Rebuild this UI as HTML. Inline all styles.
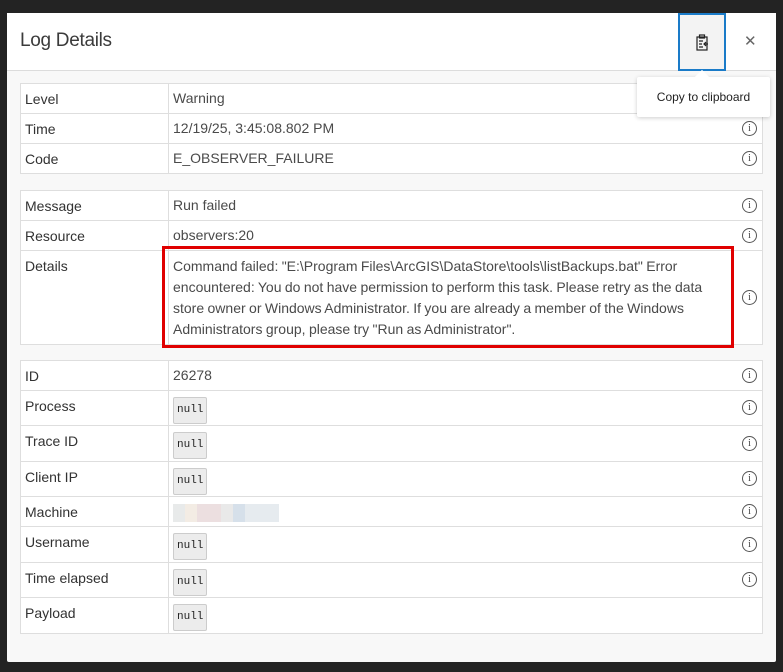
<!DOCTYPE html>
<html><head><style>
body{margin:0;width:783px;height:672px;background:#232323;font-family:"Liberation Sans",sans-serif;position:relative;overflow:hidden;color:#4a4a4a}
.dlg{position:absolute;left:7px;top:13px;width:769px;height:649px;background:#f8f8f8;border-radius:2px}
.hdr{position:absolute;left:0;top:0;width:769px;height:57px;background:#fff;border-bottom:1px solid #dcdcdc}
.ttl{position:absolute;left:13px;top:17px;font-size:19px;color:#3b3b3b;letter-spacing:-0.3px}
.copy{position:absolute;left:671px;top:0;width:44px;height:54px;border:2px solid #1a7bc8;background:#f3f3f3}
.x{position:absolute;left:737px;top:19px;font-size:15px;color:#666}
.tip{position:absolute;left:637px;top:77px;width:133px;height:40px;background:#fff;box-shadow:0 1px 4px rgba(0,0,0,.2);border-radius:2px;font-size:12px;color:#222;line-height:40px;text-align:center;z-index:5}
.tip:before{content:"";position:absolute;left:60px;top:-5px;width:10px;height:10px;background:#fff;transform:rotate(45deg)}
table{position:absolute;left:20px;width:743px;border-collapse:collapse;background:#fff;font-size:14px}
td{border:1px solid #dedede;padding:0 4px;vertical-align:top}
td.l{width:139px;color:#323232;padding-top:7px}
td.v{padding-top:6px;position:relative;color:#4a4a4a}
.i{position:absolute;right:5px;top:50%;margin-top:-8px;width:13px;height:13px;border:1px solid #555;border-radius:50%;font-size:10px;line-height:13px;text-align:center;font-family:"Liberation Serif",serif;color:#444}
.n{display:inline-block;font-family:"Liberation Mono",monospace;font-size:11px;background:#ececec;border:1px solid #ccc;border-radius:2px;padding:7px 3px;margin-top:0px;color:#222;line-height:11px}
.red{position:absolute;left:162px;top:246px;width:566px;height:96px;border:3px solid #e00000}
</style></head><body>
<div class="dlg">
<div class="hdr"><div class="ttl">Log Details</div>
<div class="copy"><svg width="44" height="54" viewBox="0 0 44 54"><g fill="none" stroke="#222" stroke-width="1.2"><rect x="17" y="22" width="10" height="13"/><rect x="19.5" y="20" width="5" height="3"/><path d="M19 26h4M19 29h3M19 32h4M28 29h-4m2-2l-2 2 2 2"/></g></svg></div>
<div class="x">✕</div></div>
</div>
<div class="tip">Copy to clipboard</div>
<table style="top:83px">
<tr style="height:30px"><td class="l">Level</td><td class="v">Warning</td></tr>
<tr style="height:30px"><td class="l">Time</td><td class="v">12/19/25, 3:45:08.802 PM<span class="i">i</span></td></tr>
<tr style="height:30px"><td class="l">Code</td><td class="v">E_OBSERVER_FAILURE<span class="i">i</span></td></tr>
</table>
<table style="top:190px">
<tr style="height:30px"><td class="l">Message</td><td class="v">Run failed<span class="i">i</span></td></tr>
<tr style="height:30px"><td class="l">Resource</td><td class="v">observers:20<span class="i">i</span></td></tr>
<tr style="height:94px"><td class="l">Details</td><td class="v" style="line-height:21px;padding-top:5px;padding-right:36px;word-spacing:-0.5px">Command failed: "E:\Program Files\ArcGIS\DataStore\tools\listBackups.bat" Error encountered: You do not have permission to perform this task. Please retry as the data store owner or Windows Administrator. If you are already a member of the Windows Administrators group, please try "Run as Administrator".<span class="i">i</span></td></tr>
</table>
<table style="top:360px">
<tr style="height:30px"><td class="l">ID</td><td class="v">26278<span class="i">i</span></td></tr>
<tr style="height:35px"><td class="l">Process</td><td class="v"><span class="n">null</span><span class="i">i</span></td></tr>
<tr style="height:36px"><td class="l">Trace ID</td><td class="v"><span class="n">null</span><span class="i">i</span></td></tr>
<tr style="height:35px"><td class="l">Client IP</td><td class="v"><span class="n">null</span><span class="i">i</span></td></tr>
<tr style="height:30px"><td class="l">Machine</td><td class="v"><span style="display:inline-block;width:106px;height:18px;margin-top:1px;background:linear-gradient(90deg,#e8eaea 0 12px,#f3ece4 12px 24px,#ecdfe0 24px 48px,#e9e9e9 48px 60px,#d6e0ea 60px 72px,#e6ebef 72px)"></span><span class="i">i</span></td></tr>
<tr style="height:36px"><td class="l">Username</td><td class="v"><span class="n">null</span><span class="i">i</span></td></tr>
<tr style="height:35px"><td class="l">Time elapsed</td><td class="v"><span class="n">null</span><span class="i">i</span></td></tr>
<tr style="height:36px"><td class="l">Payload</td><td class="v"><span class="n">null</span></td></tr>
</table>
<div class="red"></div>
</body></html>
